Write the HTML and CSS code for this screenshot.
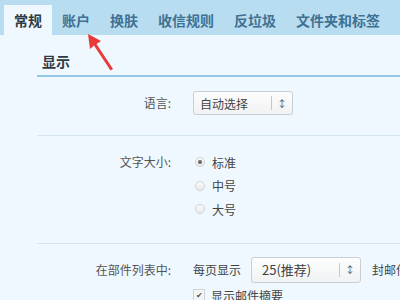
FILE: index.html
```html
<!DOCTYPE html>
<html lang="zh">
<head>
<meta charset="utf-8">
<link rel="stylesheet" href="styles.css">
</head>
<body>
<div class="tabs">
  <div class="tab active">常规</div>
  <div class="tab">账户</div>
  <div class="tab">换肤</div>
  <div class="tab">收信规则</div>
  <div class="tab">反垃圾</div>
  <div class="tab">文件夹和标签</div>
</div>
<svg class="arrow" width="40" height="45" viewBox="0 0 40 45">
  <path d="M6 2 L19 9 L14.5 12 L31 37 L28.5 38.5 L12 13.5 L8 17 Z" fill="#e83a3a"/>
</svg>
<div class="content">
  <div class="heading">显示</div>
  <div class="row row-lang">
    <div class="label">语言:</div>
    <div class="field">
      <div class="select sel-lang"><span class="sel-text">自动选择</span><span class="sel-sep"></span><span class="sel-arrows">&#x2195;</span></div>
    </div>
  </div>
  <div class="divider"></div>
  <div class="row row-size">
    <div class="label">文字大小:</div>
    <div class="field radios">
      <div class="radio-line"><span class="radio checked"></span>标准</div>
      <div class="radio-line"><span class="radio"></span>中号</div>
      <div class="radio-line"><span class="radio"></span>大号</div>
    </div>
  </div>
  <div class="divider"></div>
  <div class="row row-list">
    <div class="label">在部件列表中:</div>
    <div class="field">
      <div class="inline">每页显示<div class="select sel-num"><span class="sel-text">25(推荐)</span><span class="sel-sep"></span><span class="sel-arrows">&#x2195;</span></div>封邮件</div>
      <div class="check-line"><span class="check">&#x2714;</span>显示邮件摘要</div>
    </div>
  </div>
</div>
</body>
</html>
```
FILE: styles.css
```css
html, body {
  margin: 0;
  padding: 0;
}
body {
  width: 400px;
  height: 300px;
  overflow: hidden;
  background: #eef8fe;
  font-family: "Noto Sans CJK SC", "Noto Sans", sans-serif;
  color: #555;
  position: relative;
}
.tabs {
  display: flex;
  align-items: flex-end;
  height: 35px;
  background: #b8ddf0;
  padding-left: 4px;
  box-sizing: border-box;
}
.tab {
  height: 30px;
  line-height: 30px;
  padding: 0 10px;
  font-size: 14px;
  font-weight: bold;
  color: #3f7193;
  white-space: nowrap;
}
.tab.active {
  background: #eef8fe;
  color: #2f3b44;
}
.arrow {
  position: absolute;
  left: 82px;
  top: 32px;
}
.content {
  padding-left: 37px;
}
.heading {
  font-size: 14px;
  font-weight: bold;
  color: #2f3b44;
  padding: 16px 0 4px 5px;
  line-height: 20px;
  border-bottom: 2px solid #93c8e2;
}
.row {
  display: grid;
  grid-template-columns: 134px minmax(0, 1fr);
  column-gap: 22px;
  font-size: 12px;
}
.label {
  text-align: right;
  color: #555;
  white-space: nowrap;
}
.field {
  min-width: 0;
}
.row-lang {
  padding: 14px 0 20px;
}
.row-lang .label {
  line-height: 24px;
}
.divider {
  height: 1px;
  background: #d5e6f0;
}
.select {
  display: inline-flex;
  align-items: center;
  flex-shrink: 0;
  height: 22px;
  border: 1px solid #c9cfd3;
  border-radius: 3px;
  background: linear-gradient(#fdfdfd, #f1f2f3);
  color: #444;
  font-size: 12px;
}
.sel-lang {
  width: 98px;
}
.sel-text {
  flex: 1;
  padding-left: 6px;
  white-space: nowrap;
}
.sel-sep {
  width: 1px;
  height: 14px;
  background: #c4c8cc;
}
.sel-arrows {
  width: 20px;
  text-align: center;
  font-size: 10px;
  color: #555;
}
.row-size {
  padding: 17px 0 19px;
}
.row-size .label {
  line-height: 18px;
}
.radio-line {
  display: flex;
  align-items: center;
  height: 18px;
  margin-bottom: 5.5px;
  color: #444;
}
.radio {
  width: 10px;
  height: 10px;
  border-radius: 50%;
  border: 1px solid #cfd3d6;
  background: linear-gradient(#fbfbfb, #e6e8ea);
  margin: 0 7px 0 2px;
  box-sizing: border-box;
  position: relative;
}
.radio.checked::after {
  content: "";
  position: absolute;
  left: 2px;
  top: 2px;
  width: 4px;
  height: 4px;
  border-radius: 50%;
  background: #666;
}
.row-list {
  padding: 13px 0 0;
}
.row-list .label {
  line-height: 26px;
}
.inline {
  display: flex;
  align-items: center;
  height: 26px;
  color: #444;
  white-space: nowrap;
}
.sel-num {
  width: 108px;
  height: 24px;
  margin: 0 11px 0 10px;
}
.sel-num .sel-text {
  padding-left: 10px;
  font-size: 13px;
}
.check-line {
  display: flex;
  align-items: center;
  margin-top: 4px;
  color: #444;
  white-space: nowrap;
}
.check {
  width: 10px;
  height: 10px;
  border: 1px solid #cfd3d6;
  background: #f4f4f4;
  font-size: 8px;
  line-height: 10px;
  text-align: center;
  margin-right: 6px;
  color: #555;
}
```
